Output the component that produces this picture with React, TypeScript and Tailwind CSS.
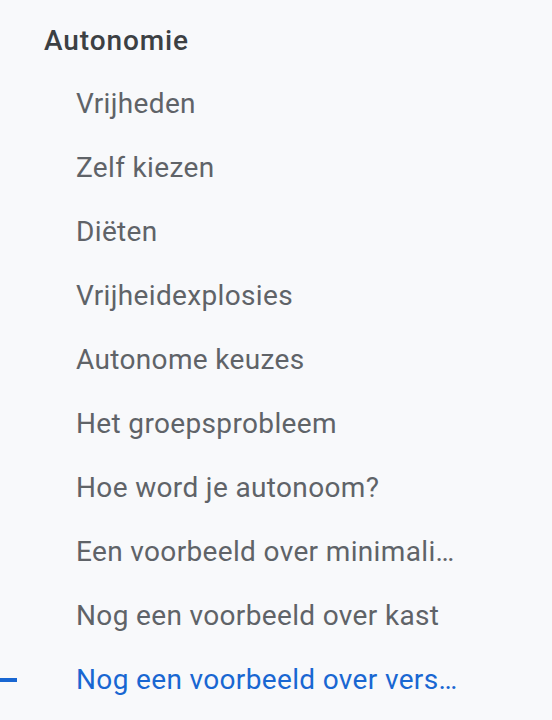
const items = [
  "Vrijheden",
  "Zelf kiezen",
  "Diëten",
  "Vrijheidexplosies",
  "Autonome keuzes",
  "Het groepsprobleem",
  "Hoe word je autonoom?",
  "Een voorbeeld over minimalisme in huis",
  "Nog een voorbeeld over kast",
  "Nog een voorbeeld over verspilling",
];

export default function App() {
  const active = items.length - 1;
  return (
    <div className="h-[720px] w-[552px] overflow-hidden bg-[#f8f9fb] font-['Roboto',sans-serif]">
      <nav className="pt-[22px]">
        <h2 className="pl-[44px] text-[28px] leading-[38px] font-medium tracking-[0.9px] text-[#3c4043]">Autonomie</h2>
        <ul className="mt-[12px] flex flex-col">
          {items.map((label, i) => (
            <li key={label} className="relative flex h-[64px] items-center">
              {i === active && <span className="absolute left-0 top-1/2 h-[4px] w-[17px] -translate-y-1/2 bg-[#1967d2]" />}
              <a
                href="#"
                className={
                  "ml-[76px] block w-[384px] truncate text-[28px] leading-[38px] tracking-[0.35px] " +
                  (i === active ? "text-[#1967d2]" : "text-[#5f6368]")
                }
              >
                {label}
              </a>
            </li>
          ))}
        </ul>
      </nav>
    </div>
  );
}
